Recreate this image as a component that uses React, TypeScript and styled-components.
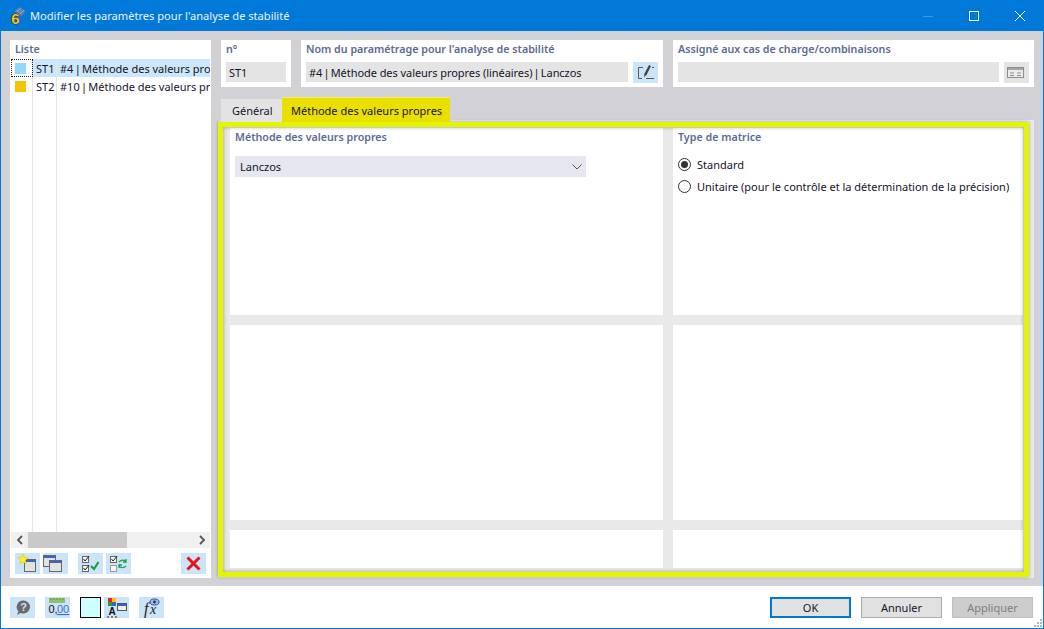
import React from "react";
import styled, { createGlobalStyle } from "styled-components";

const Global = createGlobalStyle`
  html, body { margin: 0; padding: 0; background: #fff; overflow: hidden; }
  * { box-sizing: border-box; }
`;

const FONT = `"Noto Sans", "Open Sans", "Liberation Sans", sans-serif`;

const Window = styled.div`
  width: 1044px; height: 629px; display: flex; flex-direction: column;
  border: 1px solid #0078d7; border-top: 0; background: #fff;
  font-family: ${FONT}; font-size: 11px; color: #14142b; position: relative;
`;
const TitleBar = styled.div`
  height: 31px; flex: none; background: #0078d7; margin: 0 -1px; display: flex; align-items: center;
  padding-left: 8px; color: #fff;
`;
const TitleText = styled.span` margin-left: 4px; font-size: 11.1px; color: #eaf4fc; `;
const WinControls = styled.div` margin-left: auto; display: flex; align-items: center; padding-right: 1px; `;
const WinBtn = styled.div`
  width: 46px; height: 31px; display: flex; align-items: center; justify-content: center;
`;
const Body = styled.div`
  height: 555px; flex: none; background: #d1d1d6; display: flex; gap: 8px; padding: 9px 0 0 9px;
`;
const ListPanel = styled.div`
  width: 201px; height: 538px; background: #fff; display: flex; flex-direction: column; padding-left: 1px;
`;
const SectionTitle = styled.div`
  font-weight: 600; font-size: 10.7px; color: #5c6b8f; line-height: 16px; white-space: nowrap;
`;
const ListTitle = styled(SectionTitle)` padding: 1px 0 2px 4px; height: 19px; `;
const ListBody = styled.div` flex: 1; display: flex; flex-direction: column; position: relative; `;
const ListRow = styled.div`
  height: 18px; display: flex; align-items: center; white-space: nowrap; overflow: hidden;
  line-height: 20px; padding-right: 1px;
`;
const SwatchCell = styled.div<{ $focus?: boolean }>`
  width: 22px; height: 18px; flex: none; display: flex; align-items: center; justify-content: center;
  padding-right: 2px; border-right: 1px solid #e6e6e6;
  outline: ${(p) => (p.$focus ? "1px dotted #222" : "none")}; outline-offset: -1px;
`;
const Swatch = styled.div<{ $c: string }>` width: 11px; height: 11px; background: ${(p) => p.$c}; `;
const IdCell = styled.div<{ $sel?: boolean }>`
  width: 24px; flex: none; height: 18px; padding-left: 3px; border-right: 1px solid #e6e6e6;
  background: ${(p) => (p.$sel ? "#cce6fb" : "transparent")};
`;
const NameCell = styled.div<{ $sel?: boolean }>`
  flex: 1; height: 18px; padding-left: 3px; overflow: hidden;
  background: ${(p) => (p.$sel ? "#cce6fb" : "transparent")};
`;
const Sep = styled.span` word-spacing: -1.6px; `;
const ColumnFill = styled.div` flex: 1; display: flex; `;
const ColA = styled.div` width: 22px; border-right: 1px solid #e6e6e6; `;
const ColB = styled.div` width: 24px; border-right: 1px solid #e6e6e6; `;
const ScrollBar = styled.div`
  height: 16px; flex: none; width: 199px; background: #f0f0f0; display: flex; align-items: center;
`;
const ScrollArrow = styled.div` width: 17px; height: 16px; display: flex; align-items: center; justify-content: center; flex: none; `;
const ScrollThumb = styled.div` width: 99px; height: 16px; background: #c9c9c9; `;
const ScrollSpace = styled.div` flex: 1; `;
const ListTools = styled.div`
  height: 30px; flex: none; display: flex; align-items: flex-start; padding: 5px 0 0 4px;
`;
const IconBtn = styled.div<{ $w?: number; $ml?: number; $grey?: boolean }>`
  width: ${(p) => p.$w ?? 25}px; height: 21px; flex: none; margin-left: ${(p) => p.$ml ?? 0}px;
  background: ${(p) => (p.$grey ? "#e3e3e3" : "#cce4f7")}; display: flex; align-items: center; justify-content: center;
`;
const RightCol = styled.div` width: 815px; display: flex; flex-direction: column; `;
const HeaderRow = styled.div` height: 47px; flex: none; display: flex; gap: 10px; padding-left: 2px; `;
const HeadCard = styled.div<{ $w: number }>`
  width: ${(p) => p.$w}px; background: #fff; padding: 1px 5px 0; display: flex; flex-direction: column;
`;
const FieldRow = styled.div` display: flex; justify-content: space-between; margin-top: 5px; `;
const Field = styled.div<{ $w: number }>`
  width: ${(p) => p.$w}px; height: 20px; background: #e4e4e4; line-height: 22px; padding-left: 3px; white-space: nowrap;
  letter-spacing: -0.06px;
`;
const Tabs = styled.div`
  height: 25px; flex: none; margin-top: 10px; padding-left: 2px; display: flex; align-items: flex-end;
  position: relative; z-index: 1;
`;
const Tab = styled.div<{ $active?: boolean; $w: number }>`
  width: ${(p) => p.$w}px; height: ${(p) => (p.$active ? 25 : 23)}px; line-height: ${(p) => (p.$active ? 26 : 23)}px;
  padding-left: ${(p) => (p.$active ? 9 : 11)}px;
  background: ${(p) => (p.$active ? "#ebdf00" : "#e3e3e3")}; white-space: nowrap;
  border-top: ${(p) => (p.$active ? "1px solid #f6ee66" : "0")};
`;
const Panel = styled.div`
  margin-top: -2px; height: 458px; background: #e9e9e9; position: relative;
  padding: 8px 11px 10px 11px; display: grid; grid-template-columns: 433px 350px;
  grid-template-rows: 187px 195px 38px; gap: 10px;
`;
const Highlight = styled.div`
  position: absolute; left: -1px; top: 2px; width: 811px; height: 455px; border: 5px solid #e4f500;
  box-shadow: 0 0 3px rgba(0,0,0,.3), inset 0 0 4px rgba(0,0,0,.35); pointer-events: none;
`;
const Card = styled.div` background: #fff; padding: 1px 5px 0; display: flex; flex-direction: column; `;
const Select = styled.div`
  margin-top: 11px; width: 351px; height: 21px; background: #e6e6f0; display: flex; align-items: center;
  justify-content: space-between; padding: 0 4px 0 5px;
`;
const RadioList = styled.div` margin-top: 13px; display: flex; flex-direction: column; gap: 9px; `;
const RadioRow = styled.div` height: 13px; display: flex; align-items: center; gap: 6px; white-space: nowrap; `;
const RadioCircle = styled.div<{ $on?: boolean }>`
  width: 13px; height: 13px; border-radius: 50%; border: 1px solid #333; background: #fff; flex: none;
  display: flex; align-items: center; justify-content: center;
  &::after { content: ""; width: 7px; height: 7px; border-radius: 50%; background: ${(p) => (p.$on ? "#333" : "transparent")}; }
`;
const Footer = styled.div` flex: 1; display: flex; align-items: flex-start; padding: 11px 0 0 9px; position: relative; `;
const ColorBox = styled.div` width: 21px; height: 21px; background: #ccffff; border: 1px solid #000; margin-left: 10px; flex: none; `;
const Buttons = styled.div` margin-left: auto; display: flex; gap: 10px; padding-right: 10px; `;
const Btn = styled.div<{ $kind?: "ok" | "off" }>`
  width: 81px; height: 21px; display: flex; align-items: center; justify-content: center;
  background: ${(p) => (p.$kind === "off" ? "#cccccc" : "#e1e1e1")};
  border: ${(p) => (p.$kind === "ok" ? "2px solid #0078d7" : p.$kind === "off" ? "1px solid #bfbfbf" : "1px solid #adadad")};
  color: ${(p) => (p.$kind === "off" ? "#808080" : "#14142b")};
`;
const Grip = styled.svg` position: absolute; right: 0; bottom: 0; `;

const Chevron = ({ dir }: { dir: "left" | "right" }) => (
  <svg width="8" height="10" viewBox="0 0 8 10">
    <path d={dir === "left" ? "M6 1 2 5l4 4" : "M2 1l4 4-4 4"} fill="none" stroke="#555" strokeWidth="1.8" />
  </svg>
);
const WinFrame = ({ x, y, w = 14, h = 13 }: { x: number; y: number; w?: number; h?: number }) => (
  <g>
    <rect x={x + 0.5} y={y + 0.5} width={w} height={h} fill="#e2e2e2" stroke="#666" />
    <rect x={x + 1} y={y + 1} width={w - 1} height="2" fill="#3a62c9" />
  </g>
);
const NewIcon = () => (
  <svg width="25" height="21" viewBox="0 0 25 21">
    <WinFrame x={9} y={6} w={11} h={12} />
    <path d="M8 1l1.6 3.4 3.6.4-2.7 2.4.8 3.6L8 9l-3.3 1.8.8-3.6L2.8 4.8l3.6-.4z" fill="#f7ee2e" stroke="#d6c200" strokeWidth=".5" />
  </svg>
);
const CopyIcon = () => (
  <svg width="25" height="21" viewBox="0 0 25 21">
    <WinFrame x={0} y={2} w={12} h={11} />
    <WinFrame x={6} y={7} w={12} h={11} />
  </svg>
);
const Box = ({ x, y, on = true }: { x: number; y: number; on?: boolean }) => (
  <g>
    <rect x={x + 0.5} y={y + 0.5} width="6" height="6" fill="#f4f4f4" stroke={on ? "#666" : "#9a9a9a"} />
    {on && <path d={`M${x + 1.5} ${y + 3}l1.6 2 4-5`} fill="none" stroke="#222" strokeWidth="1" />}
  </g>
);
const CheckAllIcon = () => (
  <svg width="25" height="21" viewBox="0 0 25 21">
    <Box x={4} y={3} />
    <Box x={4} y={12} />
    <path d="M13 13l3 3 4.5-7" fill="none" stroke="#16a04a" strokeWidth="2.2" />
  </svg>
);
const CheckSwapIcon = () => (
  <svg width="25" height="21" viewBox="0 0 25 21">
    <Box x={4} y={3} />
    <Box x={4} y={12} on={false} />
    <path d="M13 9c2-2 5-2 7-1M20 6v3h-3" fill="none" stroke="#16a04a" strokeWidth="1.3" />
    <path d="M20 13c-2 2-5 2-7 0M13 15v-3h3" fill="none" stroke="#16a04a" strokeWidth="1.3" />
  </svg>
);
const CrossIcon = () => (
  <svg width="25" height="21" viewBox="0 0 25 21">
    <path d="M6.5 4.5l12 12M18.5 4.5l-12 12" stroke="#e3141c" strokeWidth="3" />
  </svg>
);
const HelpIcon = () => (
  <svg width="25" height="21" viewBox="0 0 25 21">
    <path d="M13.5 3.5a6.5 6.5 0 0 1 0 13c-1 0-2-.2-3-.6L7 18l1.4-3.6A6.5 6.5 0 0 1 13.5 3.5z" fill="#6a6a6a" />
    <text x="13.5" y="14" textAnchor="middle" fontFamily="Liberation Sans, sans-serif" fontWeight="700" fontSize="11" fill="#cce4f7">?</text>
  </svg>
);
const DecimalsIcon = () => (
  <svg width="25" height="21" viewBox="0 0 25 21">
    <rect x="4" y="1" width="16" height="5" fill="#8fc06a" />
    <path d="M6 1v2M9 1v2M12 1v2M15 1v2M18 1v2" stroke="#5f9a3f" />
    <text x="3.5" y="16" fontFamily="Liberation Sans, sans-serif" fontSize="11" fill="#111">0,</text>
    <text x="12" y="16" fontFamily="Liberation Sans, sans-serif" fontSize="11" fill="#3a70d0" textDecoration="underline">00</text>
  </svg>
);
const StyleIcon = () => (
  <svg width="25" height="21" viewBox="0 0 25 21">
    <rect x="4" y="1" width="4" height="4" fill="#e8262a" />
    <rect x="8" y="1" width="4" height="4" fill="#f2c811" />
    <rect x="4" y="5" width="4" height="4" fill="#2a9a3a" />
    <rect x="8" y="5" width="4" height="4" fill="#3a5fd0" />
    <rect x="13.5" y="6.5" width="9" height="7" fill="#eee" stroke="#555" />
    <rect x="14" y="7" width="8" height="2" fill="#3a62c9" />
    <text x="4.5" y="18" fontFamily="Liberation Sans, sans-serif" fontWeight="700" fontSize="10" fill="#111">A</text>
    <path d="M3 20h2M7 20h2M11 20h2" stroke="#222" />
  </svg>
);
const FormulaIcon = () => (
  <svg width="25" height="21" viewBox="0 0 25 21">
    <text x="5" y="17" fontFamily="Liberation Serif, serif" fontStyle="italic" fontSize="16" fill="#222">f</text>
    <text x="11" y="17" fontFamily="Liberation Serif, serif" fontStyle="italic" fontSize="14" fill="#222">x</text>
    <ellipse cx="15.5" cy="5" rx="4.5" ry="3" fill="#a8b8e6" stroke="#3b4a90" />
    <circle cx="15.5" cy="5" r="1.4" fill="#1f2a70" />
  </svg>
);
const EditIcon = () => (
  <svg width="25" height="21" viewBox="0 0 25 21">
    <path d="M10 5.5H5.5v11H9M13 16.5h8M19 5.5h2" fill="none" stroke="#555" />
    <path d="M16 3l2 1-4.5 9-2.5 2 .3-3z" fill="#444" />
  </svg>
);
const AssignIcon = () => (
  <svg width="25" height="21" viewBox="0 0 25 21">
    <rect x="3.5" y="5.5" width="16" height="10" fill="#ececec" stroke="#8d8d8d" />
    <rect x="4" y="6" width="15" height="2" fill="#a5a5a5" />
    <path d="M6 11h4M13 11h4M6 13.5h4M13 13.5h4" stroke="#8d8d8d" />
  </svg>
);
const AppLogo = () => (
  <svg width="18" height="20" viewBox="0 0 18 20">
    <path d="M6 5l6-4 6 4-5 6z" fill="#5a78a8" />
    <path d="M8 4l6 4M10 2.5l6 4M13 2l-4 4M16 4l-4 4" stroke="#9db4d6" strokeWidth=".6" />
    <text x="7.5" y="17.5" textAnchor="middle" fontFamily="Liberation Sans, sans-serif" fontWeight="700" fontSize="15" fill="#f3c21a" stroke="#2b2b2b" strokeWidth="1" paintOrder="stroke">6</text>
  </svg>
);

export default function App() {
  return (
    <>
      <Global />
      <Window>
        <TitleBar>
          <AppLogo />
          <TitleText>Modifier les paramètres pour l'analyse de stabilité</TitleText>
          <WinControls>
            <WinBtn>
              <svg width="12" height="12" viewBox="0 0 12 12"><path d="M1 6.5h10" stroke="#3f9ae3" /></svg>
            </WinBtn>
            <WinBtn>
              <svg width="12" height="12" viewBox="0 0 12 12"><rect x="1.5" y="1.5" width="9" height="9" fill="none" stroke="#fff" /></svg>
            </WinBtn>
            <WinBtn>
              <svg width="12" height="12" viewBox="0 0 12 12"><path d="M1 1l10 10M11 1L1 11" stroke="#fff" /></svg>
            </WinBtn>
          </WinControls>
        </TitleBar>
        <Body>
          <ListPanel>
            <ListTitle>Liste</ListTitle>
            <ListBody>
              <ListRow>
                <SwatchCell $focus><Swatch $c="#93d7f9" /></SwatchCell>
                <IdCell $sel>ST1</IdCell>
                <NameCell $sel>#4<Sep> | </Sep>Méthode des valeurs propres (linéaires)<Sep> | </Sep>Lanczos</NameCell>
              </ListRow>
              <ListRow>
                <SwatchCell><Swatch $c="#f5c400" /></SwatchCell>
                <IdCell>ST2</IdCell>
                <NameCell>#10<Sep> | </Sep>Méthode des valeurs propres (linéaires)</NameCell>
              </ListRow>
              <ColumnFill><ColA /><ColB /></ColumnFill>
            </ListBody>
            <ScrollBar>
              <ScrollArrow><Chevron dir="left" /></ScrollArrow>
              <ScrollThumb />
              <ScrollSpace />
              <ScrollArrow><Chevron dir="right" /></ScrollArrow>
            </ScrollBar>
            <ListTools>
              <IconBtn><NewIcon /></IconBtn>
              <IconBtn $ml={3}><CopyIcon /></IconBtn>
              <IconBtn $ml={10}><CheckAllIcon /></IconBtn>
              <IconBtn $ml={3}><CheckSwapIcon /></IconBtn>
              <IconBtn $ml={50}><CrossIcon /></IconBtn>
            </ListTools>
          </ListPanel>
          <RightCol>
            <HeaderRow>
              <HeadCard $w={70}>
                <SectionTitle>n°</SectionTitle>
                <FieldRow><Field $w={60}>ST1</Field></FieldRow>
              </HeadCard>
              <HeadCard $w={362}>
                <SectionTitle>Nom du paramétrage pour l'analyse de stabilité</SectionTitle>
                <FieldRow>
                  <Field $w={322}>#4<Sep> | </Sep>Méthode des valeurs propres (linéaires)<Sep> | </Sep>Lanczos</Field>
                  <IconBtn><EditIcon /></IconBtn>
                </FieldRow>
              </HeadCard>
              <HeadCard $w={361}>
                <SectionTitle>Assigné aux cas de charge/combinaisons</SectionTitle>
                <FieldRow>
                  <Field $w={321} />
                  <IconBtn $grey><AssignIcon /></IconBtn>
                </FieldRow>
              </HeadCard>
            </HeaderRow>
            <Tabs>
              <Tab $w={61}>Général</Tab>
              <Tab $w={168} $active>Méthode des valeurs propres</Tab>
            </Tabs>
            <Panel>
              <Card>
                <SectionTitle>Méthode des valeurs propres</SectionTitle>
                <Select>
                  Lanczos
                  <svg width="10" height="6" viewBox="0 0 10 6"><path d="M.5.5 5 5 9.5.5" fill="none" stroke="#555" /></svg>
                </Select>
              </Card>
              <Card>
                <SectionTitle>Type de matrice</SectionTitle>
                <RadioList>
                  <RadioRow><RadioCircle $on />Standard</RadioRow>
                  <RadioRow><RadioCircle />Unitaire (pour le contrôle et la détermination de la précision)</RadioRow>
                </RadioList>
              </Card>
              <Card /><Card /><Card /><Card />
              <Highlight />
            </Panel>
          </RightCol>
        </Body>
        <Footer>
          <IconBtn><HelpIcon /></IconBtn>
          <IconBtn $ml={10}><DecimalsIcon /></IconBtn>
          <ColorBox />
          <IconBtn $ml={3}><StyleIcon /></IconBtn>
          <IconBtn $ml={10}><FormulaIcon /></IconBtn>
          <Buttons>
            <Btn $kind="ok">OK</Btn>
            <Btn>Annuler</Btn>
            <Btn $kind="off">Appliquer</Btn>
          </Buttons>
          <Grip width="10" height="10" viewBox="0 0 10 10">
            <path d="M7 1h2v2H7zM4 4h2v2H4zM7 4h2v2H7zM1 7h2v2H1zM4 7h2v2H4zM7 7h2v2H7z" fill="#b5b5b5" />
          </Grip>
        </Footer>
      </Window>
    </>
  );
}
